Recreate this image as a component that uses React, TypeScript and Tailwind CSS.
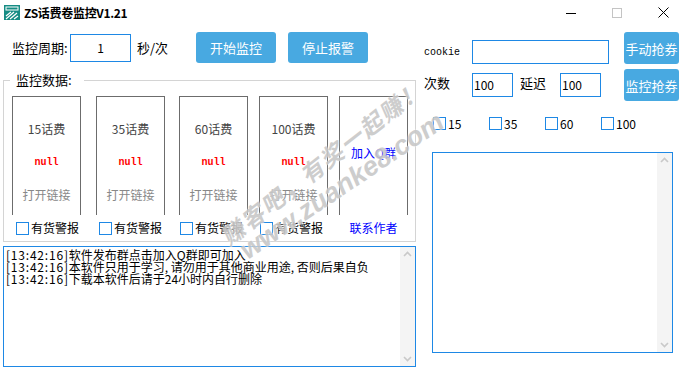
import React from 'react';

const cards = [
    { title: '15话费', col: 'w-[84px]', box: 'ml-[4px]' },
    { title: '35话费', col: 'w-[83px]', box: 'ml-[3px]' },
    { title: '60话费', col: 'w-[80px]', box: 'ml-[1px]' },
    { title: '100话费', col: 'w-[80px]', box: 'ml-[1px]' },
];

const logs = [
    '软件发布群点击加入Q群即可加入',
    '本软件只用于学习, 请勿用于其他商业用途, 否则后果自负',
    '下载本软件后请于24小时内自行删除',
];

function Box() {
    return <span className="block h-[13px] w-[13px] shrink-0 border border-[#1e88e5] bg-white" />;
}

function ScrollBar() {
    return (
        <div className="flex h-full w-[15px] flex-col items-center justify-between bg-[#f4f4f4] py-[4px]">
            <svg width="9" height="6" viewBox="0 0 9 6">
                <path d="M1 5 L4.5 1.5 L8 5" fill="none" stroke="#c9c9c9" strokeWidth="1.6" />
            </svg>
            <svg width="9" height="6" viewBox="0 0 9 6">
                <path d="M1 1 L4.5 4.5 L8 1" fill="none" stroke="#c9c9c9" strokeWidth="1.6" />
            </svg>
        </div>
    );
}

function BlueButton({ children, className }: { children: React.ReactNode; className: string }) {
    return (
        <button
            type="button"
            className={`flex shrink-0 items-center justify-center rounded-[3px] bg-[#48a9e1] text-[13px] leading-none text-white ${className}`}
        >
            {children}
        </button>
    );
}

export default function App() {
    return (
        <div className="relative h-[367px] w-[686px] overflow-hidden bg-white font-['Noto_Sans_CJK_SC',sans-serif] text-black">
            {/* title bar */}
            <div className="flex h-[25px] items-center">
                <svg className="ml-[4px]" width="16" height="15" viewBox="0 0 16 15">
                    <rect x="0" y="0" width="16" height="15" fill="#168c84" />
                    <rect x="2" y="2" width="12" height="3" fill="none" stroke="#fff" strokeWidth="1" />
                    <path d="M2 11 L7 7 M2 14 L10 7 M6 14 L13 8 M10 14 L14 11" stroke="#fff" strokeWidth="1.2" />
                </svg>
                <span className="ml-[4px] text-[12px] font-bold leading-none tracking-[-0.3px]">ZS话费卷监控V1.21</span>
                <div className="ml-auto flex h-full">
                    <div className="flex w-[46px] items-center justify-center">
                        <svg width="10" height="10" viewBox="0 0 10 10">
                            <path d="M0 5.5 H10" stroke="#000" strokeWidth="1" />
                        </svg>
                    </div>
                    <div className="flex w-[46px] items-center justify-center">
                        <svg width="10" height="10" viewBox="0 0 10 10">
                            <rect x="0.5" y="0.5" width="9" height="9" fill="none" stroke="#c4c4c4" strokeWidth="1" />
                        </svg>
                    </div>
                    <div className="flex w-[46px] items-center justify-center">
                        <svg width="11" height="11" viewBox="0 0 11 11">
                            <path d="M0.5 0.5 L10.5 10.5 M10.5 0.5 L0.5 10.5" stroke="#000" strokeWidth="1" />
                        </svg>
                    </div>
                </div>
            </div>

            <div className="flex">
                {/* left column */}
                <div className="w-[420px] shrink-0">
                    <div className="mt-[7px] flex h-[31px] items-center text-[13px]">
                        <span className="ml-[12px] w-[58px] leading-none">监控周期:</span>
                        <div className="flex h-[28px] w-[61px] items-center justify-center border border-[#1e88e5] text-[12px] leading-none">
                            1
                        </div>
                        <span className="ml-[6px] w-[59px] leading-none">秒/次</span>
                        <BlueButton className="h-[31px] w-[80px]">开始监控</BlueButton>
                        <BlueButton className="ml-[12px] h-[31px] w-[80px]">停止报警</BlueButton>
                    </div>

                    <fieldset className="ml-[3px] mt-[9px] h-[170px] w-[413px] border border-[#d4d4d4] pt-[8px]">
                        <legend className="ml-[6px] pl-[6px] pr-[12px] text-[13px] leading-[16px]">监控数据:</legend>
                        <div className="flex pl-[8px]">
                            {cards.map((c) => (
                                <div key={c.title} className={`${c.col} shrink-0`}>
                                    <div className="flex h-[119px] w-[69px] flex-col items-center border-x border-t border-[#6c6c6c] pt-[24px] text-[12px] leading-[16px]">
                                        <span className="text-[#444]">{c.title}</span>
                                        <span className="mt-[18px] font-['Liberation_Mono',monospace] text-[10px] font-bold text-[#ff0000]">
                                            null
                                        </span>
                                        <span className="mt-[16px] text-[#888]">打开链接</span>
                                    </div>
                                    <div className={`flex h-[26px] items-center ${c.box}`}>
                                        <Box />
                                        <span className="ml-[2px] text-[12px] leading-none">有货警报</span>
                                    </div>
                                </div>
                            ))}
                            <div className="w-[76px] shrink-0">
                                <div className="flex h-[119px] w-[69px] flex-col items-center border-x border-t border-[#6c6c6c] pt-[48px] text-[12px] leading-[16px] text-[#0000ff]">
                                    加入Q群
                                </div>
                                <div className="flex h-[26px] w-[69px] items-center justify-center text-[12px] leading-none text-[#0000ff]">
                                    联系作者
                                </div>
                            </div>
                        </div>
                    </fieldset>

                    <div className="ml-[3px] mt-[4px] flex h-[121px] w-[413px] border border-[#1e88e5]">
                        <div className="flex-1 pl-[2px] pt-[2px] text-[12px] leading-[12px]">
                            {logs.map((l) => (
                                <div key={l} className="whitespace-pre">
                                    <span className="tracking-[0.8px]">[13:42:16]</span>
                                    {l}
                                </div>
                            ))}
                        </div>
                        <ScrollBar />
                    </div>
                </div>

                {/* right column */}
                <div className="flex-1">
                    <div className="mt-[7px] flex h-[32px] items-start">
                        <span className="ml-[4px] mt-[15px] w-[48px] font-['Liberation_Mono',monospace] text-[10px] leading-[12px]">
                            cookie
                        </span>
                        <div className="mt-[8px] h-[24px] w-[137px] border border-[#1e88e5]" />
                        <BlueButton className="ml-[15px] h-[32px] w-[55px]">手动抢券</BlueButton>
                    </div>
                    <div className="mt-[5px] flex h-[32px] items-start text-[13px]">
                        <span className="ml-[4px] mt-[6px] w-[48px] leading-[16px]">次数</span>
                        <div className="mt-[4px] flex h-[24px] w-[41px] items-center border border-[#1e88e5] pl-[1px] text-[12px] leading-none">
                            100
                        </div>
                        <span className="ml-[7px] mt-[6px] w-[40px] leading-[16px]">延迟</span>
                        <div className="mt-[4px] flex h-[24px] w-[41px] items-center border border-[#1e88e5] pl-[1px] text-[12px] leading-none">
                            100
                        </div>
                        <BlueButton className="ml-[23px] h-[32px] w-[55px]">监控抢券</BlueButton>
                    </div>
                    <div className="ml-[13px] mt-[16px] flex h-[13px] items-center text-[12px] leading-none">
                        {['15', '35', '60', '100'].map((n) => (
                            <div key={n} className="flex w-[56px] items-center gap-[2px]">
                                <Box />
                                <span>{n}</span>
                            </div>
                        ))}
                    </div>
                    <div className="ml-[12px] mt-[22px] flex h-[201px] w-[241px] justify-end border border-[#1e88e5]">
                        <ScrollBar />
                    </div>
                </div>
            </div>

            {/* watermark */}
            <div className="pointer-events-none absolute left-[322px] top-[162px] -translate-x-1/2 -translate-y-1/2 -rotate-[38deg] whitespace-nowrap text-[23px] font-bold italic leading-none tracking-[2px] text-[#c8c8c8] opacity-90 [text-shadow:0_0_2px_#fff]">
                赚客吧，有奖一起赚！
            </div>
            <div className="pointer-events-none absolute left-[342px] top-[186px] -translate-x-1/2 -translate-y-1/2 -rotate-[34deg] whitespace-nowrap font-['Liberation_Sans',sans-serif] text-[27px] font-bold italic leading-none text-[#c8c8c8] opacity-90 [text-shadow:0_0_2px_#fff]">
                www.zuanke8.com
            </div>
        </div>
    );
}
